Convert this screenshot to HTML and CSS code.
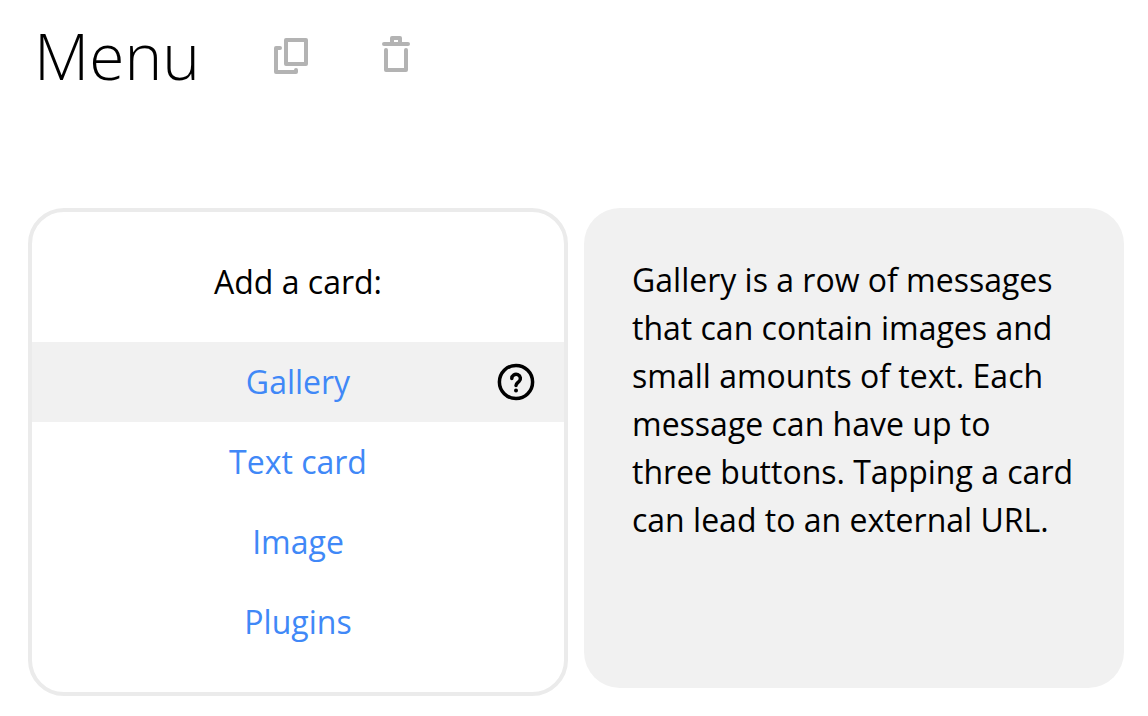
FILE: index.html
```html
<!DOCTYPE html>
<html lang="en">
<head>
<meta charset="utf-8">
<meta name="viewport" content="width=device-width, initial-scale=1">
<title>Menu</title>
<link rel="stylesheet" href="styles.css">
</head>
<body>
<header class="header">
  <h1 class="title">Menu</h1>
  <div class="actions">
    <button class="icon-button" type="button" aria-label="Duplicate">
      <svg width="36" height="36" viewBox="0 0 36 36" fill="none" stroke="currentColor" stroke-width="4" stroke-linecap="round" stroke-linejoin="round" aria-hidden="true">
        <path d="M12 2h20v24H12z"/>
        <path d="M6 10H2v24h20v-2"/>
      </svg>
    </button>
    <button class="icon-button" type="button" aria-label="Delete">
      <svg width="28" height="40" viewBox="0 0 28 40" fill="none" stroke="currentColor" stroke-width="4" stroke-linecap="round" stroke-linejoin="round" aria-hidden="true">
        <path d="M2 8h24M10 8V2h8v6"/>
        <path d="M4 14v20h20V14"/>
      </svg>
    </button>
  </div>
</header>
<main class="panels">
  <section class="card">
    <h2 class="card-title">Add a card:</h2>
    <ul class="options">
      <li class="option active">
        <a class="option-link" href="#gallery">Gallery</a>
        <button class="help" type="button" aria-label="About Gallery">
          <svg width="38" height="38" viewBox="0 0 38 38" fill="none" stroke="currentColor" stroke-width="3.500" stroke-linecap="round" stroke-linejoin="round" aria-hidden="true">
            <circle cx="19" cy="19" r="16.600"/>
            <path d="M14.800 15.500a4.300 4.100 0 1 1 7.200 3C20.200 20 19 20.600 19 22.600"/>
            <circle cx="19" cy="27.400" r="2" fill="currentColor" stroke="none"/>
          </svg>
        </button>
      </li>
      <li class="option"><a class="option-link" href="#text">Text card</a></li>
      <li class="option"><a class="option-link" href="#image">Image</a></li>
      <li class="option"><a class="option-link" href="#plugins">Plugins</a></li>
    </ul>
  </section>
  <aside class="info">
    <p class="info-text">Gallery is a row of messages that can contain images and small amounts of text. Each message can have up to three buttons. Tapping a card can lead to an external URL.</p>
  </aside>
</main>
</body>
</html>
```

FILE: styles.css
```css
* { box-sizing: border-box; }
body {
  margin: 0;
  padding: 12px 24px 20px 28px;
  background: #fff;
  color: #000;
  font-family: "Open Sans", "Noto Sans", sans-serif;
  font-size: 32px;
  line-height: 48px;
}
.header {
  display: flex;
  align-items: center;
  gap: 74px;
  padding-left: 6px;
}
.title {
  margin: 0;
  font-size: 64px;
  line-height: 88px;
  font-weight: 300;
}
.actions {
  display: flex;
  align-items: center;
  gap: 72px;
}
.icon-button, .help {
  display: flex;
  padding: 0;
  border: 0;
  background: none;
  cursor: pointer;
}
.icon-button { color: #b3b3b3; }
.panels {
  display: grid;
  grid-template-columns: 1fr 1fr;
  column-gap: 16px;
  align-items: start;
  margin-top: 108px;
}
.card {
  border: 4px solid #ebebeb;
  border-radius: 36px;
  padding: 46px 0 30px;
}
.card-title {
  margin: 0 0 36px;
  font-size: 32px;
  line-height: 48px;
  font-weight: 400;
  text-align: center;
}
.options { list-style: none; margin: 0; padding: 0; }
.option {
  display: grid;
  grid-template-columns: 1fr auto 1fr;
  align-items: center;
  min-height: 80px;
  padding: 0 29px;
}
.active { background: #f1f1f1; }
.option-link { grid-column: 2; color: #4088f7; text-decoration: none; }
.help { justify-self: end; color: #000; }
.info {
  min-height: 480px;
  padding: 48px;
  border-radius: 36px;
  background: #f1f1f1;
}
.info-text { margin: 0; }
```
